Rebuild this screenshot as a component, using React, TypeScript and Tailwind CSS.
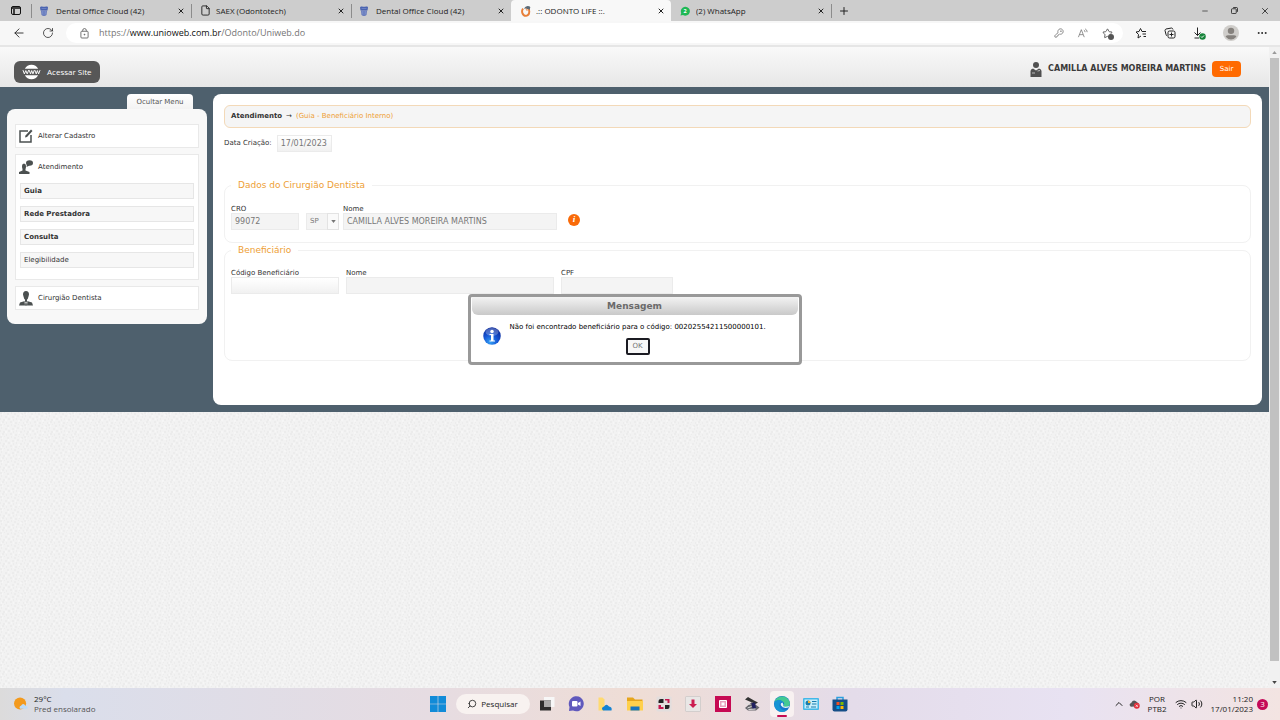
import React, { useState } from 'react';
import { clsx } from 'clsx';
import {
  ArrowLeft, RotateCw, X, Plus, Minus, KeyRound, File,
  MoreHorizontal, Search, ChevronUp, Wifi, Volume2, Star,
} from 'lucide-react';

type IconProps = { className?: string };

const ToothIcon = ({ className }: IconProps) => (
  <svg viewBox="0 0 16 20" className={className}>
    <path d="M0 3Q1 0 4 1Q8 2 12 1Q16 0 16 3L15 9H1Z" fill="#4a63b0" />
    <path d="M2 9h12l-1 9q-2 2-5 2t-5-2Z" fill="#6478bb" />
    <path d="M3 5h10M5 10v7M8 10v8M11 10v7" stroke="#8fa0d6" strokeWidth="1" />
  </svg>
);

const OdontoIcon = ({ className }: IconProps) => (
  <svg viewBox="0 0 20 22" className={className} fill="none">
    <path d="M5 7Q2 9 3 14q2 6 7 6 6-1 6-8 0-4-2-6" stroke="#e8803a" strokeWidth="3.500" />
    <path d="M6 7Q9 2 13 2q4 0 5 2-1 2-1 5-3-3-5-1-3-3-6-1Z" fill="#5b6b78" />
    <path d="M9 7q3 0 3 4" stroke="#eda06b" strokeWidth="2" />
  </svg>
);

const WhatsIcon = ({ className }: IconProps) => (
  <svg viewBox="0 0 20 20" className={className}>
    <path d="M1 19l1.500-5A9 9 0 1 1 6 18Z" fill="#1fb855" />
    <text x="10" y="14" textAnchor="middle" fontSize="11" fontWeight="bold" fill="#fff">2</text>
  </svg>
);

const LockIcon = ({ className }: IconProps) => (
  <svg viewBox="0 0 20 24" className={className} fill="none" stroke="#555" strokeWidth="1.800">
    <rect x="2" y="7" width="16" height="15" rx="2" />
    <path d="M6 7V5q0-4 4-4t4 4v2" />
    <circle cx="10" cy="14.500" r="1" fill="#555" />
  </svg>
);

const RestoreIcon = ({ className }: IconProps) => (
  <svg viewBox="0 0 16 16" className={className} fill="none" stroke="#222" strokeWidth="2">
    <rect x="1" y="4" width="11" height="11" rx="2" />
    <path d="M5 1h7q3 0 3 3v7" />
  </svg>
);

const GlobeIcon = ({ className }: IconProps) => (
  <svg viewBox="0 0 20 16" className={className}>
    <path d="M3 4.500a8 8 0 0 1 14 0ZM3 11.500a8 8 0 0 0 14 0Z" fill="#fff" />
    <path d="M1 6l1.500 4L4 6.500 5.500 10 7 6M7.500 6L9 10l1.200-3.500L11.500 10 13 6M13.500 6L15 10l1.200-3.500L17.500 10 19 6" stroke="#fff" strokeWidth="1" fill="none" />
  </svg>
);

const UserIcon = ({ className }: IconProps) => (
  <svg viewBox="0 0 24 30" className={className} fill="#505050">
    <circle cx="12" cy="6" r="6" />
    <path d="M1 30V18q0-4 5-5l6 4 6-4q5 1 5 5v12Z" />
    <path d="M4 22h6M15 18l5-1" stroke="#ddd" strokeWidth="1.500" />
  </svg>
);

const EditIcon = ({ className }: IconProps) => (
  <svg viewBox="0 0 28 28" className={className} fill="none" stroke="#4b5050" strokeWidth="3">
    <path d="M18 4H2v22h22V12" />
    <path d="M12 17l1-4L24 1l3 3-11 12Z" fill="#4b5050" stroke="none" />
  </svg>
);

const AttendIcon = ({ className }: IconProps) => (
  <svg viewBox="0 0 28 28" className={className} fill="#4b5050">
    <ellipse cx="21" cy="6" rx="7" ry="5.500" />
    <path d="M16 8l-1 6 6-3Z" />
    <path d="M6 12q0-5 4-5t4 5-1 6v3l8 3v4H0v-4l7-3v-3q-1-2-1-6Z" />
  </svg>
);

const DentistIcon = ({ className }: IconProps) => (
  <svg viewBox="0 0 28 30" className={className} fill="#4b5050">
    <path d="M8 7q0-7 6-7t6 7l-1 4q-1 5-3 6v3l10 3 2 6H0l2-6 10-3v-3q-2-1-3-6Z" />
    <path d="M11 20l3 3 3-3-1 9h-4Z" fill="#fff" />
    <path d="M13 23h2l1 6h-4Z" fill="#4b5050" />
  </svg>
);

const StarLinesIcon = ({ className }: IconProps) => (
  <svg viewBox="0 0 24 24" className={className} fill="none" stroke="#222" strokeWidth="2">
    <path d="M14 9l-3-6-3 6-6 1 5 5-1 7 6-4M14 9h8M15 14h7M17 19h5" strokeLinejoin="round" />
  </svg>
);

const CollectionsIcon = ({ className }: IconProps) => (
  <svg viewBox="0 0 24 24" className={className} fill="none" stroke="#222" strokeWidth="2">
    <rect x="8" y="8" width="14" height="14" rx="3" />
    <path d="M15 11v8M11 15h8M6 17q-2 0-2-2L2 7q0-2 2-3l11-2q2 0 3 3" />
  </svg>
);

const DownloadIcon = ({ className }: IconProps) => (
  <svg viewBox="0 0 26 26" className={className} fill="none" stroke="#222" strokeWidth="2">
    <path d="M9 1v16M3 11l6 6 6-6M3 22h9" />
    <circle cx="19" cy="19" r="6.500" fill="#16843a" stroke="none" />
    <path d="M16 19l2 2 4-4" stroke="#fff" />
  </svg>
);

const ReadAloudIcon = ({ className }: IconProps) => (
  <svg viewBox="0 0 26 24" className={className} fill="none" stroke="#666" strokeWidth="1.700">
    <path d="M2 22L9 4l7 18M5 16h8M15 5q3 1 3 5M18 2q5 2 5 8" />
  </svg>
);

const AvatarIcon = ({ className }: IconProps) => (
  <svg viewBox="0 0 30 30" className={className}>
    <circle cx="15" cy="15" r="15" fill="#cfcdca" />
    <circle cx="15" cy="11" r="6" fill="#85817d" />
    <path d="M5 22q0-3 4-3h12q4 0 4 3-4 5-10 5T5 22Z" fill="#85817d" />
  </svg>
);

const MessageIcon = ({ className }: IconProps) => (
  <svg viewBox="0 0 36 36" className={className}>
    <defs>
      <radialGradient id="msg" cx="40%" cy="85%" r="80%">
        <stop offset="0" stopColor="#35a0f4" />
        <stop offset="0.500" stopColor="#1658d6" />
        <stop offset="1" stopColor="#0a2a9c" />
      </radialGradient>
    </defs>
    <circle cx="18" cy="18" r="17.500" fill="url(#msg)" />
    <ellipse cx="18" cy="10" rx="13" ry="8" fill="#fff" opacity="0.250" />
    <circle cx="18" cy="9" r="3.500" fill="#fff" />
    <path d="M13 14h8v13h3v2H13v-2h3V16h-3Z" fill="#fff" />
  </svg>
);

const tabs = [
  { title: 'Dental Office Cloud (42)', icon: <ToothIcon className="h-2.5 w-2" /> },
  { title: 'SAEX (Odontotech)', icon: <File className="h-[11px] w-[11px] text-[#222]" /> },
  { title: 'Dental Office Cloud (42)', icon: <ToothIcon className="h-2.5 w-2" /> },
  { title: '.:: ODONTO LIFE ::.', icon: <OdontoIcon className="h-3 w-3" />, active: true },
  { title: '(2) WhatsApp', icon: <WhatsIcon className="h-2.5 w-2.5" /> },
];

const BrowserChrome = () => (
  <header className="shrink-0 font-['Open_Sans',sans-serif] text-[#222]">
    <div className="flex h-[21px] items-center bg-[#cdcdcd]">
      <button aria-label="Guias" className="flex w-[31px] justify-center">
        <svg viewBox="0 0 20 18" className="h-[9px] w-[10px]" fill="none" stroke="#111" strokeWidth="2">
          <rect x="1" y="1" width="18" height="16" rx="3" />
          <path d="M1 4h18M6 6v11" strokeWidth="3" />
        </svg>
      </button>
      {tabs.map((tab, i) => (
        <div
          key={i}
          className={clsx('flex h-full w-40 items-center pr-1.5', tab.active && 'rounded-t-sm bg-[#f8f8f8]')}
        >
          <span className={clsx('mr-2 h-3.5 w-px', i < 3 && 'bg-[#8c8c8c]')} />
          <span className="flex w-4 shrink-0">{tab.icon}</span>
          <span className="flex-1 truncate text-[8px]">{tab.title}</span>
          <button aria-label="Fechar guia"><X className="h-2 w-2" strokeWidth={3} /></button>
        </div>
      ))}
      <span className="h-3.5 w-px bg-[#8c8c8c]" />
      <button aria-label="Nova guia" className="ml-1.5"><Plus className="h-3 w-3" /></button>
      <div className="ml-auto flex items-center gap-[22px] pr-2.5">
        <button aria-label="Minimizar"><Minus className="h-2 w-2" /></button>
        <button aria-label="Restaurar"><RestoreIcon className="h-[7px] w-[7px]" /></button>
        <button aria-label="Fechar"><X className="h-2.5 w-2.5" /></button>
      </div>
    </div>
    <div className="flex h-[26px] items-center border-b-2 border-[#e6e6e6] bg-[#f7f7f7] pr-3 pl-3">
      <button aria-label="Voltar"><ArrowLeft className="h-3.5 w-3.5" strokeWidth={1.500} /></button>
      <button aria-label="Atualizar" className="ml-4"><RotateCw className="h-3 w-3" strokeWidth={1.500} /></button>
      <div className="ml-3 flex h-5 flex-1 items-center rounded-full bg-white pr-2.5 pl-3.5">
        <LockIcon className="h-[11px] w-[9px]" />
        <p className="ml-2.5 flex-1 text-[9px] text-[#757575]">
          https://<span className="text-[#111]">www.unioweb.com.br</span>/Odonto/Uniweb.do
        </p>
        <div className="flex items-center gap-[13px]">
          <KeyRound className="h-2.5 w-2.5 text-[#777]" />
          <ReadAloudIcon className="h-2.5 w-3" />
          <span className="relative">
            <Star className="h-[11px] w-[11px] text-[#555]" />
            <span className="absolute -right-px -bottom-px h-1.5 w-1.5 rounded-full bg-[#555]" />
          </span>
        </div>
      </div>
      <div className="ml-3 flex items-center gap-[17px]">
        <button aria-label="Favoritos"><StarLinesIcon className="h-3 w-3" /></button>
        <button aria-label="Coleções"><CollectionsIcon className="h-3 w-3" /></button>
        <button aria-label="Downloads"><DownloadIcon className="h-[13px] w-[13px]" /></button>
        <button aria-label="Perfil"><AvatarIcon className="h-4 w-4" /></button>
        <button aria-label="Mais"><MoreHorizontal className="h-3 w-3" /></button>
      </div>
    </div>
  </header>
);

const SiteHeader = () => (
  <div className="flex h-10 items-start justify-between bg-linear-to-b from-[#f9f9f9] to-[#e7e7e7] px-3.5 pt-3.5">
    <a href="#" className="flex h-[22px] items-center gap-1.5 rounded-md bg-[#575757] px-2 font-['Open_Sans',sans-serif] text-[8px] text-white">
      <GlobeIcon className="h-4 w-[19px]" />
      Acessar Site
    </a>
    <div className="flex items-center pr-3.5">
      <UserIcon className="h-[15px] w-3" />
      <strong className="ml-1.5 text-[8px] leading-4 text-[#3a3a3a]">CAMILLA ALVES MOREIRA MARTINS</strong>
      <button className="ml-1.5 h-4 w-[29px] rounded-sm bg-[#ff6a00] text-[7px] text-white">Sair</button>
    </div>
  </div>
);

const subItems = [
  { name: 'Guia', bold: true },
  { name: 'Rede Prestadora', bold: true },
  { name: 'Consulta', bold: true },
  { name: 'Elegibilidade', bold: false },
];

const Sidebar = () => (
  <nav className="w-[200px] shrink-0">
    <div className="flex justify-end pr-3.5">
      <button className="h-[15px] w-[66px] rounded-t-sm bg-linear-to-b from-white to-[#f3f3f3] text-[7px] leading-[17px] text-[#555]">Ocultar Menu</button>
    </div>
    <div className="flex flex-col gap-1.5 rounded-lg bg-[#f8f8f8] px-2 pt-[15px] pb-3.5">
      <a href="#" className="flex h-6 items-center gap-[5px] border border-[#e9e9e9] bg-white px-[3px]">
        <EditIcon className="h-3.5 w-3.5" /> Alterar Cadastro
      </a>
      <div className="border border-[#e9e9e9] bg-white pb-[11px]">
        <a href="#" className="flex h-7 items-center gap-[5px] px-[3px] pb-1">
          <AttendIcon className="h-3.5 w-3.5" /> Atendimento
        </a>
        <ul className="flex flex-col gap-[7px] px-1">
          {subItems.map((item) => (
            <li key={item.name}>
              <a
                href="#"
                className={clsx('flex h-4 items-center border border-[#e6e6e6] bg-[#f7f7f7] px-[3px]', item.bold && 'font-bold')}
              >
                {item.name}
              </a>
            </li>
          ))}
        </ul>
      </div>
      <a href="#" className="flex h-6 items-center gap-[5px] border border-[#e9e9e9] bg-white px-[3px]">
        <DentistIcon className="h-[15px] w-3.5" /> Cirurgião Dentista
      </a>
    </div>
  </nav>
);

const inputBase = 'h-[17px] border border-[#ebebeb] px-[3px] text-[#777]';

type FieldProps = { id: string; label: string; value?: string; className: string };

const Field = ({ id, label, value = '', className }: FieldProps) => (
  <div className="flex flex-col">
    <label htmlFor={id} className="h-[9px] leading-[11px]">{label}</label>
    <input id={id} defaultValue={value} className={clsx(inputBase, 'text-[8px]', className)} />
  </div>
);

const GuiaForm = () => (
  <form className="min-w-0 flex-1 rounded-lg bg-white px-[11px] pt-[11px] pb-11" onSubmit={(e) => e.preventDefault()}>
    <div className="flex h-[23px] items-center gap-1 rounded-md border border-[#f3d9b8] bg-[#f5f5f5] px-1.5">
      <strong>Atendimento</strong> →
      <span className="text-[#eea035]">(Guia - Beneficiário Interno)</span>
    </div>
    <div className="mt-[7px] flex items-center gap-[5px]">
      <label htmlFor="data">Data Criação:</label>
      <input id="data" defaultValue="17/01/2023" className={clsx(inputBase, 'w-[55px] bg-linear-to-b from-white to-[#f1f1f1] text-[8px]')} />
    </div>

    <fieldset className="mt-[26px] rounded-lg border border-[#f1f1f1] px-1.5 pb-3">
      <legend className="px-[7px] text-[9px] leading-[14px] text-[#eea035]">Dados do Cirurgião Dentista</legend>
      <div className="flex items-end pt-3">
        <Field id="cro" label="CRO" value="99072" className="w-[68px] bg-[#f4f4f4]" />
        <div className="relative ml-[7px]">
          <select aria-label="UF" className={clsx(inputBase, 'block w-[33px] appearance-none bg-[#f4f4f4] text-[7px]')}>
            <option>SP</option>
          </select>
          <span className="pointer-events-none absolute inset-y-0 right-0 flex w-3 items-center justify-center border border-[#e3e3e3] bg-[#fafafa]">
            <svg viewBox="0 0 6 4" className="h-[3px] w-[5px]"><path d="M0 0h6L3 4Z" fill="#777" /></svg>
          </span>
        </div>
        <span className="w-1" />
        <Field id="nome" label="Nome" value="CAMILLA ALVES MOREIRA MARTINS" className="w-[214px] bg-[#f4f4f4]" />
        <button aria-label="Informações" className="mb-1 ml-[11px] flex h-3 w-3 items-center justify-center rounded-full bg-[#f96a08] font-['Liberation_Serif',serif] text-[9px] font-bold text-white italic">i</button>
      </div>
    </fieldset>

    <fieldset className="rounded-lg border border-[#f1f1f1] px-1.5 pb-[66px]">
      <legend className="px-[7px] text-[9px] leading-[14px] text-[#eea035]">Beneficiário</legend>
      <div className="flex gap-[7px] pt-[11px]">
        <Field id="codigo" label="Código Beneficiário" className="w-[108px] bg-linear-to-b from-white to-[#f1f1f1]" />
        <Field id="nomeBenef" label="Nome" className="w-[208px] bg-[#f4f4f4]" />
        <Field id="cpf" label="CPF" className="w-28 bg-[#f4f4f4]" />
      </div>
    </fieldset>
  </form>
);

const MessageDialog = ({ onClose }: { onClose: () => void }) => (
  <div
    role="dialog"
    aria-labelledby="msg-title"
    className="absolute top-[247px] left-1/2 w-[334px] -translate-x-1/2 rounded-sm border-3 border-[#999] bg-white pb-[7px]"
  >
    <h2 id="msg-title" className="mx-px h-[18px] rounded-b-md bg-linear-to-b from-[#f3f3f3] to-[#c9c9c9] text-center text-[9px] leading-[18px] font-bold text-[#6a6a6a]">
      Mensagem
    </h2>
    <div className="flex items-center pl-3">
      <MessageIcon className="mt-0.5 h-[18px] w-[18px]" />
      <div className="flex flex-1 flex-col items-center pr-5 pt-[7px]">
        <p className="w-full pl-[9px] leading-[10px] whitespace-nowrap text-black">
          Não foi encontrado beneficiário para o código: 00202554211500000101.
        </p>
        <button onClick={onClose} className="mt-1.5 mr-1 h-[17px] w-6 rounded-xs border-2 border-[#1b1b22] bg-[#f7f7f7] text-[7px] text-[#777]">OK</button>
      </div>
    </div>
  </div>
);

// Textura de fundo da página
const PaperTexture = () => (
  <svg className="w-full flex-1 bg-[#f2f2f2]" height="0">
    <defs>
      <pattern id="paper" width="24" height="12" patternUnits="userSpaceOnUse">
        <path
          d="M0 1h2M4 0h1M7 2h2M11 1h1M14 2h2M18 0h1M21 2h2M1 4h1M5 5h2M9 4h1M12 5h2M17 4h2M22 5h1M0 7h1M3 8h2M8 7h2M13 8h1M16 7h1M20 8h2M2 10h2M6 11h1M10 10h2M15 11h2M19 10h1M23 11h1"
          stroke="#e6e6e6"
        />
        <path d="M2 2h1M8 4h2M15 5h1M20 3h2M5 8h2M11 7h1M18 9h2M1 11h1M13 11h1" stroke="#fafafa" />
      </pattern>
    </defs>
    <rect width="100%" height="100%" fill="url(#paper)" />
  </svg>
);

const Scrollbar = () => (
  <div className="flex w-[11px] shrink-0 flex-col items-center bg-[#f1f1f1] py-1">
    <svg viewBox="0 0 6 4" className="mb-1 h-[3px] w-[5px]"><path d="M0 4h6L3 0Z" fill="#999" /></svg>
    <div className="w-[9px] flex-1 bg-[#c1c1c1]" />
    <svg viewBox="0 0 6 4" className="mt-5 h-[3px] w-[5px]"><path d="M0 0h6L3 4Z" fill="#444" /></svg>
  </div>
);

const apps = [
  {
    name: 'Visão de tarefas',
    icon: <><path d="M10 2h21v20H10Z" fill="#f7f7f7" /><path d="M2 9h22v20H2Z" fill="#2d2d2d" /><path d="M10 9h14v13H10Z" fill="#aaa" /></>,
  },
  {
    name: 'Chat',
    icon: <><path d="M2 30l1-8A15 15 0 1 1 10 29Z" fill="#6059bd" /><rect x="8" y="10" width="11" height="11" rx="2" fill="#fff" /><path d="M20 14l5-3v9l-5-3Z" fill="#fff" /></>,
  },
  {
    name: 'OneDrive',
    icon: <><path d="M3 3h8l4 4v22H3Z" fill="#ffda70" /><path d="M12 29q-5-5 2-8 5-7 10 0 7 1 5 8Z" fill="#1483d2" /></>,
  },
  {
    name: 'Explorador de Arquivos',
    icon: <><path d="M0 3h12l4 4h15v8H0Z" fill="#e6a51b" /><path d="M0 10h32v19H0Z" fill="#ffd04c" /><path d="M7 21h18v8H7Z" fill="#1975be" /></>,
  },
  {
    name: 'Painel',
    icon: <><rect x="1" y="1" width="30" height="30" rx="2" fill="#e2dedd" /><path d="M5 10q0-4 5-4h5v8H5Z" fill="#222" /><path d="M18 6h9v8h-4V9h-5Z" fill="#c51950" /><path d="M5 18h5v4h5v4H5Z" fill="#c51950" /><path d="M18 18h9v4q0 4-4 4h-5Z" fill="#222" /></>,
  },
  {
    name: 'Download',
    icon: <><rect x="1" y="1" width="30" height="30" rx="2" fill="#e9e7e6" stroke="#bbb" /><path d="M13 7h6v9h5l-8 8-8-8h5Z" fill="#cc1e51" /></>,
  },
  {
    name: 'Gravador',
    icon: <><path d="M0 0h32v32H0Z" fill="#c60a53" /><path d="M9 9h14v14H9Z" fill="#e8a1bd" stroke="#fff" strokeWidth="2" /><path d="M13 13h6v6h-6Z" fill="#fff" /></>,
  },
  {
    name: 'Scanner',
    icon: <><path d="M8 2l12 7 8 4-5 3L2 7Z" fill="#333" /><path d="M2 24l14-12 15 11-7 6H8Z" fill="#66666c" /><path d="M15 14l7-1 2 11-7 2Z" fill="#202060" /><path d="M3 14l10 3M7 24l8-3M9 27l14-1" stroke="#ddd" strokeWidth="2" /></>,
  },
  {
    name: 'Edge',
    active: true,
    icon: <><circle cx="16" cy="16" r="16" fill="#1477ce" /><path d="M1 12C4-1 27-5 32 14c0 8-11 10-14 6 8-6-6-17-17-8Z" fill="#43c993" /><path d="M2 11q8-7 15 1-7 0-6 8 2 10 15 8Q14 37 4 26-1 20 2 11Z" fill="#1695d4" /><path d="M17 13q-5 1-3 6 4 7 15 4l2-3q-10 3-13 0 2-2-1-7Z" fill="#e9f4f5" /></>,
  },
  {
    name: 'Painel de controle',
    icon: <><rect x="0" y="4" width="32" height="24" rx="2" fill="#43b8e8" /><path d="M3 7h26v18H3Z" fill="#c9effb" /><circle cx="10" cy="14" r="5" fill="#187cae" /><path d="M10 14V9a5 5 0 0 1 5 5Z" fill="#f5b22f" /><path d="M18 11h9M18 16h9M6 22h6M16 22h10" stroke="#187cae" strokeWidth="2" /></>,
  },
  {
    name: 'Microsoft Store',
    icon: <><path d="M10 8V3h12v5" fill="none" stroke="#2c9fdf" strokeWidth="3" /><path d="M1 7h30v20q0 4-4 4H5q-4 0-4-4Z" fill="#154e88" /><path d="M9 12h6v6H9Z" fill="#f25022" /><path d="M17 12h6v6h-6Z" fill="#7fba00" /><path d="M9 20h6v6H9Z" fill="#00a4ef" /><path d="M17 20h6v6h-6Z" fill="#ffb900" /></>,
  },
];

const Taskbar = () => (
  <footer className="flex h-8 shrink-0 items-center font-['Open_Sans',sans-serif] text-[8px] text-[#222]">
    <div className="flex h-full flex-1 items-center gap-1.5 bg-linear-to-r from-[#dcdbdb] via-[#dadeeb] via-15% to-[#e6dce2] pl-3.5">
      <svg viewBox="0 0 30 30" className="h-3.5 w-3.5">
        <circle cx="13" cy="14" r="13" fill="#f39a1d" />
        <path d="M13 25q-3-4 2-6 4-7 9-1 6 1 5 7Z" fill="#bddcf8" />
      </svg>
      <div className="leading-[10px]">
        <p>29°C</p>
        <p className="text-[#555]">Pred ensolarado</p>
      </div>
    </div>
    <div className="flex h-full items-center bg-linear-to-r from-[#e6dce2] via-[#efddd5] to-[#e4dcea]">
      <button aria-label="Iniciar" className="mr-2.5">
        <svg viewBox="0 0 16 16" className="h-4 w-4" fill="#118bd8"><path d="M0 0h7.700v7.700H0ZM8.300 0H16v7.700H8.300ZM0 8.300h7.700V16H0ZM8.300 8.300H16V16H8.300Z" /></svg>
      </button>
      <button className="mr-[5px] flex h-5 w-[74px] items-center justify-center gap-1 rounded-full bg-[#f8f2f0]">
        <Search className="h-2.5 w-2.5 -scale-x-100" /> Pesquisar
      </button>
      <div className="flex w-[318px] justify-between">
        {apps.map((app) => (
          <button
            key={app.name}
            aria-label={app.name}
            className={clsx('relative flex h-[26px] w-6 items-center justify-center rounded-sm', app.active && 'bg-[#f8f1f1]')}
          >
            <svg viewBox="0 0 32 32" className="h-4 w-4">{app.icon}</svg>
            {app.active && <span className="absolute bottom-0 h-0.5 w-2.5 rounded-full bg-[#c40a50]" />}
          </button>
        ))}
      </div>
    </div>
    <div className="flex h-full flex-1 items-center justify-end bg-linear-to-r from-[#e4dcea] via-[#e8e2f2] to-[#f3e4e2] pr-3">
      <ChevronUp className="h-3 w-3" />
      <svg viewBox="0 0 24 22" className="ml-1 h-[10px] w-[11px]">
        <path d="M4 17Q-2 12 5 8q5-9 13-1 5 3 3 9Z" fill="#555" />
        <circle cx="17" cy="15" r="6.500" fill="#df2f3a" />
        <path d="M14.500 12.500l5 5m0-5l-5 5" stroke="#fff" strokeWidth="1.500" />
      </svg>
      <p className="ml-2 text-center leading-[10px]">POR<br />PTB2</p>
      <Wifi className="ml-2 h-3 w-3" />
      <Volume2 className="ml-1 h-3 w-3" />
      <p className="ml-2 text-right leading-[10px]">11:20<br />17/01/2023</p>
      <span className="ml-1 flex h-[11px] w-[11px] items-center justify-center rounded-full bg-[#c40a58] text-white">3</span>
    </div>
  </footer>
);

export default function App() {
  const [open, setOpen] = useState(true);

  return (
    <div className="flex min-h-screen flex-col">
      <BrowserChrome />
      <div className="flex flex-1 bg-[#f1f1f1] font-['DejaVu_Sans',Verdana,sans-serif] text-[7px] text-[#333]">
        <main className="relative flex min-w-0 flex-1 flex-col">
          <SiteHeader />
          <div className="flex items-start gap-1.5 bg-[#4e606d] p-[7px]">
            <Sidebar />
            <GuiaForm />
          </div>
          <PaperTexture />
          {open && <MessageDialog onClose={() => setOpen(false)} />}
        </main>
        <Scrollbar />
      </div>
      <Taskbar />
    </div>
  );
}
